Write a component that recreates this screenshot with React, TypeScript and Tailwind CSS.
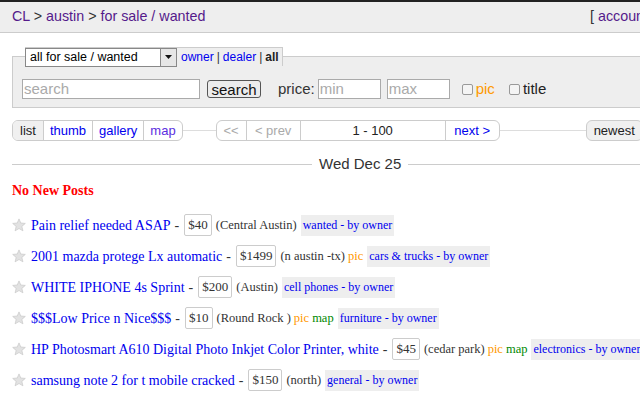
import React from 'react';

type Post = {
  title: string;
  price: string;
  hood: string;
  pic?: boolean;
  map?: boolean;
  cat: string;
};

const posts: Post[] = [
  { title: 'Pain relief needed ASAP', price: '$40', hood: '(Central Austin)', cat: 'wanted - by owner' },
  { title: '2001 mazda protege Lx automatic', price: '$1499', hood: '(n austin -tx)', pic: true, cat: 'cars & trucks - by owner' },
  { title: 'WHITE IPHONE 4s Sprint', price: '$200', hood: '(Austin)', cat: 'cell phones - by owner' },
  { title: '$$$Low Price n Nice$$$', price: '$10', hood: '(Round Rock )', pic: true, map: true, cat: 'furniture - by owner' },
  { title: 'HP Photosmart A610 Digital Photo Inkjet Color Printer, white', price: '$45', hood: '(cedar park)', pic: true, map: true, cat: 'electronics - by owner' },
  { title: 'samsung note 2 for t mobile cracked', price: '$150', hood: '(north)', cat: 'general - by owner' },
];

function Star() {
  return (
    <svg width="14" height="14" viewBox="0 0 24 24" className="shrink-0">
      <polygon
        points="12,1.5 15,8.6 22.8,9.3 16.9,14.4 18.7,22 12,18 5.3,22 7.1,14.4 1.2,9.3 9,8.6"
        fill="#e2e2e2"
        stroke="#c8c8c8"
        strokeWidth="1.2"
      />
    </svg>
  );
}

function Checkbox() {
  return <span className="inline-block w-[11px] h-[11px] border border-[#999] rounded-[2px] bg-[#f4f4f4] mr-[3px]" />;
}

export default function App() {
  const sans = { fontFamily: '"Liberation Sans", Arial, sans-serif' };
  const serif = { fontFamily: '"Liberation Serif", "Times New Roman", serif' };
  return (
    <div className="w-[640px] h-[400px] overflow-hidden bg-white" style={sans}>
      <div className="w-[720px]">
        {/* top bar */}
        <div className="border-t-2 border-[#222] bg-[#eee] border-b border-b-[#ccc] h-[33px] flex items-center justify-between pl-3 pr-[64px] text-[14.3px]">
          <div className="text-[#333]">
            <span className="text-[#551a8b]">CL</span> &gt; <span className="text-[#551a8b]">austin</span> &gt;{' '}
            <span className="text-[#551a8b]">for sale / wanted</span>
          </div>
          <div className="text-[#333]">
            [ <span className="text-[#551a8b]">account</span> ]
          </div>
        </div>

        <div className="px-3">
          {/* search fieldset */}
          <fieldset className="mt-[14px] border border-[#ccc] bg-[#eee] pl-[9px] pb-[8px] pt-[13px]">
            <legend className="ml-[3px] flex items-center bg-[#eee] border-t border-r border-[#ccc] h-[19px] pr-[3px] text-[12px]">
              <div className="flex items-center w-[152px] h-[19px] border border-[#888] bg-white">
                <span className="flex-1 pl-[4px] text-black text-[12.5px]">all for sale / wanted</span>
                <span className="w-[16px] h-[17px] border-l border-[#888] bg-[#e6e6e6] flex items-center justify-center">
                  <svg width="7" height="4" viewBox="0 0 7 4">
                    <polygon points="0,0 7,0 3.5,4" fill="#111" />
                  </svg>
                </span>
              </div>
              <span className="ml-[4px] text-[#00e]">owner</span>
              <span className="mx-[3px] text-[#333]">|</span>
              <span className="text-[#00e]">dealer</span>
              <span className="mx-[3px] text-[#333]">|</span>
              <span className="font-bold text-[#222]">all</span>
            </legend>
            <div className="flex items-center h-[20px] text-[15px]">
              <div className="w-[178px] h-[20px] border border-[#aaa] bg-white pl-[1px] text-[#aaa] leading-[18px]">search</div>
              <div className="ml-[7px] w-[54px] h-[18px] border border-[#555] rounded-[3px] bg-[#ececec] text-[#111] flex items-center justify-center leading-none">
                search
              </div>
              <span className="ml-[17px] text-[#333]">price:</span>
              <div className="ml-[3px] w-[63px] h-[20px] border border-[#aaa] bg-white pl-[1px] text-[#aaa] leading-[18px]">min</div>
              <div className="ml-[6px] w-[63px] h-[20px] border border-[#aaa] bg-white pl-[1px] text-[#aaa] leading-[18px]">max</div>
              <span className="ml-[12px] flex items-center">
                <Checkbox />
                <span className="text-[#f90]">pic</span>
              </span>
              <span className="ml-[14px] flex items-center">
                <Checkbox />
                <span className="text-[#222]">title</span>
              </span>
            </div>
          </fieldset>

          {/* view + pagination */}
          <div className="mt-[12px] flex items-center text-[13px] h-[21px]">
            <div className="flex h-[21px] border border-[#ccc] rounded-[6px] overflow-hidden">
              <span className="px-[7px] bg-[#f0f0f0] text-[#222] leading-[19px]">list</span>
              <span className="px-[6px] border-l border-[#ccc] text-[#00e] leading-[19px]">thumb</span>
              <span className="px-[6px] border-l border-[#ccc] text-[#00e] leading-[19px]">gallery</span>
              <span className="px-[6px] border-l border-[#ccc] text-[#5b2ee0] leading-[19px]">map</span>
            </div>
            <div className="w-[33px] border-t border-[#ddd]" />
            <div className="flex h-[21px] border border-[#ccc] rounded-[6px] overflow-hidden">
              <span className="w-[29px] text-center text-[#aaa] leading-[19px]">&lt;&lt;</span>
              <span className="w-[54px] text-center border-l border-[#ccc] text-[#aaa] leading-[19px]">&lt; prev</span>
              <span className="w-[145px] text-center border-l border-[#ccc] text-[#222] leading-[19px]">1 - 100</span>
              <span className="w-[54px] text-center border-l border-[#ccc] text-[#00e] leading-[19px]">next &gt;</span>
            </div>
            <div className="w-[86px] border-t border-[#ddd]" />
            <div className="h-[21px] border border-[#ccc] rounded-[6px] bg-[#f0f0f0] px-[7px] text-[#222] leading-[19px]">newest</div>
          </div>

          {/* date separator */}
          <div className="mt-[12px] flex items-center text-[15px] text-[#333]">
            <div className="w-[300px] border-t border-[#ccc]" />
            <span className="px-[7px]">Wed Dec 25</span>
            <div className="flex-1 border-t border-[#ccc]" />
          </div>

          <div className="mt-[4px] text-[#f00] font-bold text-[14px]" style={serif}>
            No New Posts
          </div>

          {/* rows */}
          <div className="mt-[9px]" style={serif}>
            {posts.map((p) => (
              <div key={p.title} className="flex items-center h-[31px] whitespace-nowrap">
                <Star />
                <span className="ml-[5px] text-[#00e] text-[14px]">{p.title}</span>
                <span className="ml-[4px] mr-[5px] text-[#333] text-[14px]">-</span>
                <span className="border border-[#ccc] rounded-[2px] px-[3px] h-[22px] leading-[20px] text-[13px] text-[#333]">
                  {p.price}
                </span>
                <span className="ml-[4px] text-[12.5px] text-[#333]">{p.hood}</span>
                {p.pic && <span className="ml-[3px] text-[12.5px] text-[#f90]">pic</span>}
                {p.map && <span className="ml-[3px] text-[12.5px] text-[#080]">map</span>}
                <span className="ml-[4px] bg-[#eee] px-[2px] h-[21px] leading-[21px] text-[12px] text-[#00e]">{p.cat}</span>
              </div>
            ))}
          </div>
        </div>
      </div>
    </div>
  );
}
